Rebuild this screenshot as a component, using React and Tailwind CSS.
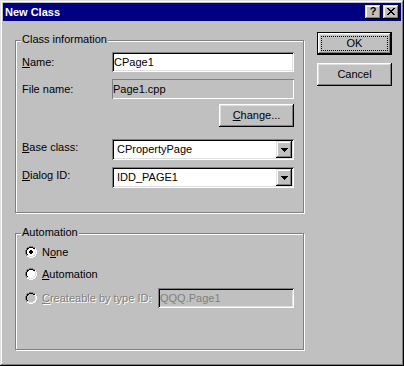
const sunken =
  "shadow-[inset_1px_1px_0_#808080,inset_-1px_-1px_0_#fff,inset_2px_2px_0_#000,inset_-2px_-2px_0_#dfdfdf]";
const raised =
  "shadow-[inset_-1px_-1px_0_#000,inset_1px_1px_0_#fff,inset_-2px_-2px_0_#808080,inset_2px_2px_0_#dfdfdf]";
const scrollBtn =
  "shadow-[inset_-1px_-1px_0_#000,inset_1px_1px_0_#dfdfdf,inset_-2px_-2px_0_#808080,inset_2px_2px_0_#fff]";

const radioRows = [
  "....GGGG....",
  "..GGKKKKGG..",
  ".GKKFFFFKKW.",
  ".GKFFFFFFLW.",
  "GKFFFFFFFFLW",
  "GKFFFFFFFFLW",
  "GKFFFFFFFFLW",
  "GKFFFFFFFFLW",
  ".GKFFFFFFLW.",
  ".GLLFFFFLLW.",
  "..WWLLLLWW..",
  "....WWWW....",
];

function Radio({ checked, disabled }) {
  const colors = {
    G: "#808080",
    K: "#000",
    W: "#fff",
    L: "#dfdfdf",
    F: disabled ? "#c0c0c0" : "#fff",
  };
  const px = [];
  radioRows.forEach((row, y) =>
    row.split("").forEach((c, x) => {
      if (c !== ".") px.push(<rect key={x + "-" + y} x={x} y={y} width="1" height="1" fill={colors[c]} />);
    })
  );
  return (
    <svg width="12" height="12" viewBox="0 0 12 12" shapeRendering="crispEdges" className="shrink-0">
      {px}
      {checked && <path d="M5 4h2v4H5z M4 5h4v2H4z" fill="#000" />}
    </svg>
  );
}

function Combo({ value }) {
  return (
    <div className={`flex items-center w-[182px] h-[21px] bg-white p-[2px] ${sunken}`}>
      <span className="flex-1 pl-[3px]">{value}</span>
      <div className={`w-[16px] h-[17px] bg-[#c0c0c0] flex items-center justify-center ${scrollBtn}`}>
        <svg width="7" height="4" viewBox="0 0 7 4" shapeRendering="crispEdges">
          <path d="M0 0h7v1H0z M1 1h5v1H1z M2 2h3v1H2z M3 3h1v1H3z" fill="#000" />
        </svg>
      </div>
    </div>
  );
}

function GroupBox({ label, className, children }) {
  return (
    <div
      className={`relative w-[289px] border border-[#808080] shadow-[inset_1px_1px_0_#fff,1px_1px_0_#fff] ${className}`}
    >
      <span className="absolute left-[5px] -top-[8px] px-[1px] bg-[#c0c0c0] leading-[13px]">{label}</span>
      {children}
    </div>
  );
}

export default function App() {
  return (
    <div
      className={`w-[404px] h-[366px] bg-[#c0c0c0] p-[3px] text-[11px] leading-[13px] text-black font-['Liberation_Sans',Arial,sans-serif] shadow-[inset_-1px_-1px_0_#000,inset_1px_1px_0_#dfdfdf,inset_-2px_-2px_0_#808080,inset_2px_2px_0_#fff]`}
    >
      {/* title bar */}
      <div className="h-[18px] bg-[#000080] flex items-center justify-between pl-[2px] pr-[2px]">
        <span className="text-white font-bold">New Class</span>
        <div className="flex gap-[2px]">
          <div className={`w-[16px] h-[14px] bg-[#c0c0c0] flex items-center justify-center font-bold pb-[1px] ${scrollBtn}`}>
            ?
          </div>
          <div className={`w-[16px] h-[14px] bg-[#c0c0c0] flex items-center justify-center pb-[1px] ${scrollBtn}`}>
            <svg width="8" height="7" viewBox="0 0 8 7" shapeRendering="crispEdges">
              <path
                d="M0 0h2v1H0z M6 0h2v1H6z M1 1h2v1H1z M5 1h2v1H5z M2 2h4v1H2z M3 3h2v1H3z M2 4h4v1H2z M1 5h2v1H1z M5 5h2v1H5z M0 6h2v1H0z M6 6h2v1H6z"
                fill="#000"
              />
            </svg>
          </div>
        </div>
      </div>

      <div className="flex items-start pl-[12px]">
        {/* left column */}
        <div className="mt-[19px] flex flex-col">
          <GroupBox label="Class information" className="h-[173px]">
            <div className="pt-[11px] pl-[6px] flex flex-col w-[278px]">
              <div className="flex items-center h-[20px]">
                <span className="w-[90px]">
                  <u className="underline">N</u>ame:
                </span>
                <div className={`w-[182px] h-[20px] bg-white flex items-center pl-[2px] ${sunken}`}>CPage1</div>
              </div>
              <div className="flex items-center h-[20px] mt-[7px]">
                <span className="w-[90px]">File name:</span>
                <div className="w-[182px] h-[20px] flex items-center pl-[1px] shadow-[inset_1px_1px_0_#808080,inset_-1px_-1px_0_#fff]">
                  Page1.cpp
                </div>
              </div>
              <div className="flex justify-end w-[272px] mt-[5px]">
                <div className={`w-[75px] h-[23px] flex items-center justify-center ${raised}`}>
                  <span>
                    <u className="underline">C</u>hange...
                  </span>
                </div>
              </div>
              <div className="flex items-center h-[21px] mt-[12px]">
                <span className="w-[90px] -mt-[4px]">
                  <u className="underline">B</u>ase class:
                </span>
                <Combo value="CPropertyPage" />
              </div>
              <div className="flex items-center h-[21px] mt-[7px]">
                <span className="w-[90px] -mt-[4px]">
                  <u className="underline">D</u>ialog ID:
                </span>
                <Combo value="IDD_PAGE1" />
              </div>
            </div>
          </GroupBox>

          <GroupBox label="Automation" className="h-[117px] mt-[20px]">
            <div className="pt-[10px] pl-[9px] flex flex-col">
              <div className="flex items-center h-[16px] gap-[5px]">
                <Radio checked />
                <span>
                  N<u className="underline">o</u>ne
                </span>
              </div>
              <div className="flex items-center h-[16px] gap-[5px] mt-[6px]">
                <Radio />
                <span>
                  <u className="underline">A</u>utomation
                </span>
              </div>
              <div className="flex items-center h-[20px] mt-[6px]">
                <Radio disabled />
                <span className="ml-[5px] w-[116px] whitespace-nowrap text-[#808080] [text-shadow:1px_1px_0_#fff]">
                  <u className="underline">C</u>reateable by type ID:
                </span>
                <div className={`w-[136px] h-[20px] flex items-center pl-[2px] text-[#808080] ${sunken}`}>
                  QQQ.Page1
                </div>
              </div>
            </div>
          </GroupBox>
        </div>

        {/* right column */}
        <div className="mt-[11px] ml-[13px] flex flex-col gap-[8px]">
          <div className={`relative w-[75px] h-[23px] border border-black flex items-center justify-center shadow-[inset_-1px_-1px_0_#000,inset_1px_1px_0_#fff,inset_-2px_-2px_0_#808080,inset_2px_2px_0_#dfdfdf]`}>
            <span className="absolute inset-[3px] border border-dotted border-black" />
            <span>OK</span>
          </div>
          <div className={`w-[75px] h-[23px] flex items-center justify-center ${raised}`}>Cancel</div>
        </div>
      </div>
    </div>
  );
}
